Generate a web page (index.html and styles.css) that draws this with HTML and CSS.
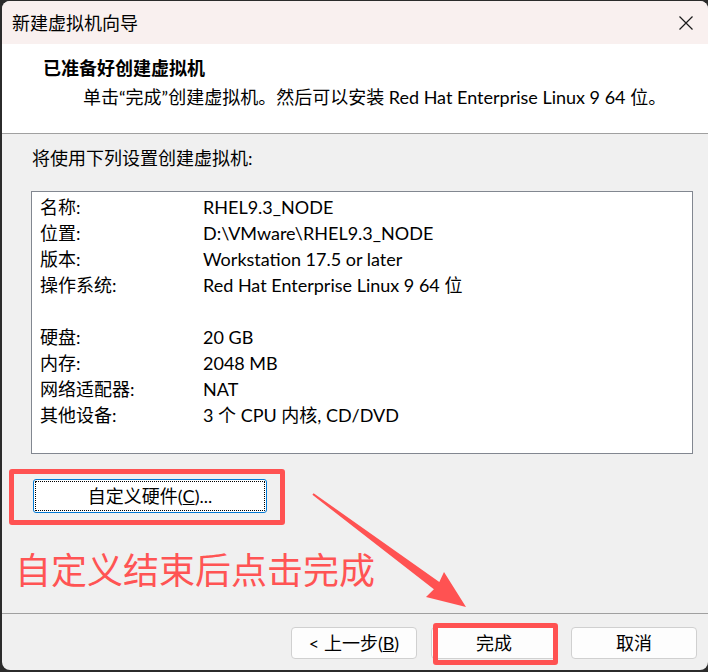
FILE: index.html
```html
<!DOCTYPE html>
<html lang="zh-CN">
<head>
<meta charset="utf-8">
<title>新建虚拟机向导</title>
<link rel="stylesheet" href="styles.css">
</head>
<body>
<div class="window">
  <div class="titlebar">
    <span class="title">新建虚拟机向导</span>
    <svg class="close" width="14" height="14" viewBox="0 0 14 14"><path d="M0.5 0.5 L13.5 13.5 M13.5 0.5 L0.5 13.5" stroke="#1a1a1a" stroke-width="1.2" fill="none"/></svg>
  </div>
  <div class="header">
    <div class="h-title">已准备好创建虚拟机</div>
    <div class="h-sub">单击“完成”创建虚拟机。然后可以安装 Red Hat Enterprise Linux 9 64 位。</div>
  </div>
  <div class="content">
    <div class="intro">将使用下列设置创建虚拟机:</div>
    <div class="listbox">
      <div>名称:</div><div>RHEL9.3_NODE</div>
      <div>位置:</div><div>D:\VMware\RHEL9.3_NODE</div>
      <div>版本:</div><div>Workstation 17.5 or later</div>
      <div>操作系统:</div><div>Red Hat Enterprise Linux 9 64 位</div>
      <div></div><div></div>
      <div>硬盘:</div><div>20 GB</div>
      <div>内存:</div><div>2048 MB</div>
      <div>网络适配器:</div><div>NAT</div>
      <div>其他设备:</div><div>3 个 CPU 内核, CD/DVD</div>
    </div>
    <button class="btn custom-btn">自定义硬件(<u>C</u>)...</button>
    <div class="note">自定义结束后点击完成</div>
    <div class="mark mark-custom"></div>
  </div>
  <div class="footer">
    <button class="btn">&lt; 上一步(<u>B</u>)</button>
    <button class="btn finish">完成<span class="mark mark-finish"></span></button>
    <button class="btn">取消</button>
  </div>
</div>
<svg class="arrow" width="708" height="672" viewBox="0 0 708 672">
  <polygon points="312.4,494.8 433.9,589.3 426,597 466,607 444,572 439.3,582.1 313.6,493.2" fill="#ff5252"/>
</svg>
</body>
</html>
```
FILE: styles.css
```css
* { box-sizing: border-box; }

body {
  margin: 0;
  width: 708px;
  height: 672px;
  overflow: hidden;
  position: relative;
  background: #2b2b2b;
  font-family: Lato, "Noto Sans CJK SC", sans-serif;
  font-size: 18px;
  color: #000;
}

.window {
  margin: 1px 0 0 2px;
  width: 706px;
  height: 669px;
  border-radius: 8px;
  overflow: hidden;
  display: flex;
  flex-direction: column;
  background: #f0f0f0;
}

.titlebar {
  flex: none;
  height: 43px;
  background: #f9f0ef;
  display: flex;
  align-items: center;
  justify-content: space-between;
  padding: 0 15px 0 10px;
}

.title { line-height: 1; }

.close { display: block; }

.header {
  flex: none;
  height: 90px;
  background: #fff;
  border-bottom: 1px solid #a0a0a0;
  padding: 11px 0 0 41px;
}

.h-title {
  font-weight: 700;
  line-height: 26px;
}

.h-sub {
  margin-top: 3px;
  padding-left: 40px;
  line-height: 26px;
}

.content {
  flex: 1;
  position: relative;
  padding: 11px 0 0 29px;
}

.intro {
  line-height: 26px;
  padding-left: 1px;
}

.listbox {
  margin-top: 20px;
  width: 662px;
  height: 263px;
  background: #fff;
  border: 1px solid #828790;
  padding: 2px 0 0 8px;
  display: grid;
  grid-template-columns: 163px 1fr;
  grid-auto-rows: 26px;
  align-content: start;
  line-height: 26px;
}

.btn {
  font: inherit;
  color: #000;
  width: 126px;
  height: 32px;
  padding: 0;
  background: #fdfdfd;
  border: 1px solid #d0d0d0;
  border-radius: 4px;
  line-height: 1;
  position: relative;
}

.custom-btn {
  display: block;
  margin: 25px 0 0 2px;
  width: 234px;
  height: 34px;
  background: #fff;
  border-color: #0078d4;
  border-radius: 3px;
  outline: 1px dotted #000;
  outline-offset: -3px;
}

.note {
  margin: 33px 0 0 -16px;
  font-family: "Noto Sans CJK SC", sans-serif;
  font-size: 36px;
  line-height: 44px;
  color: #ff5454;
}

.mark {
  position: absolute;
  border: 5px solid #ff5252;
  border-radius: 3px;
}

.mark-custom {
  left: 7px;
  top: 335px;
  width: 276px;
  height: 56px;
}

.mark-finish {
  left: 1px;
  top: -5px;
  width: 125px;
  height: 42px;
}

.footer {
  flex: none;
  height: 57px;
  border-top: 1px solid #a0a0a0;
  padding: 13px 11px 0 0;
  display: flex;
  justify-content: flex-end;
  align-items: flex-start;
  gap: 14px;
}

.arrow {
  position: absolute;
  left: 0;
  top: 0;
  pointer-events: none;
}
```
